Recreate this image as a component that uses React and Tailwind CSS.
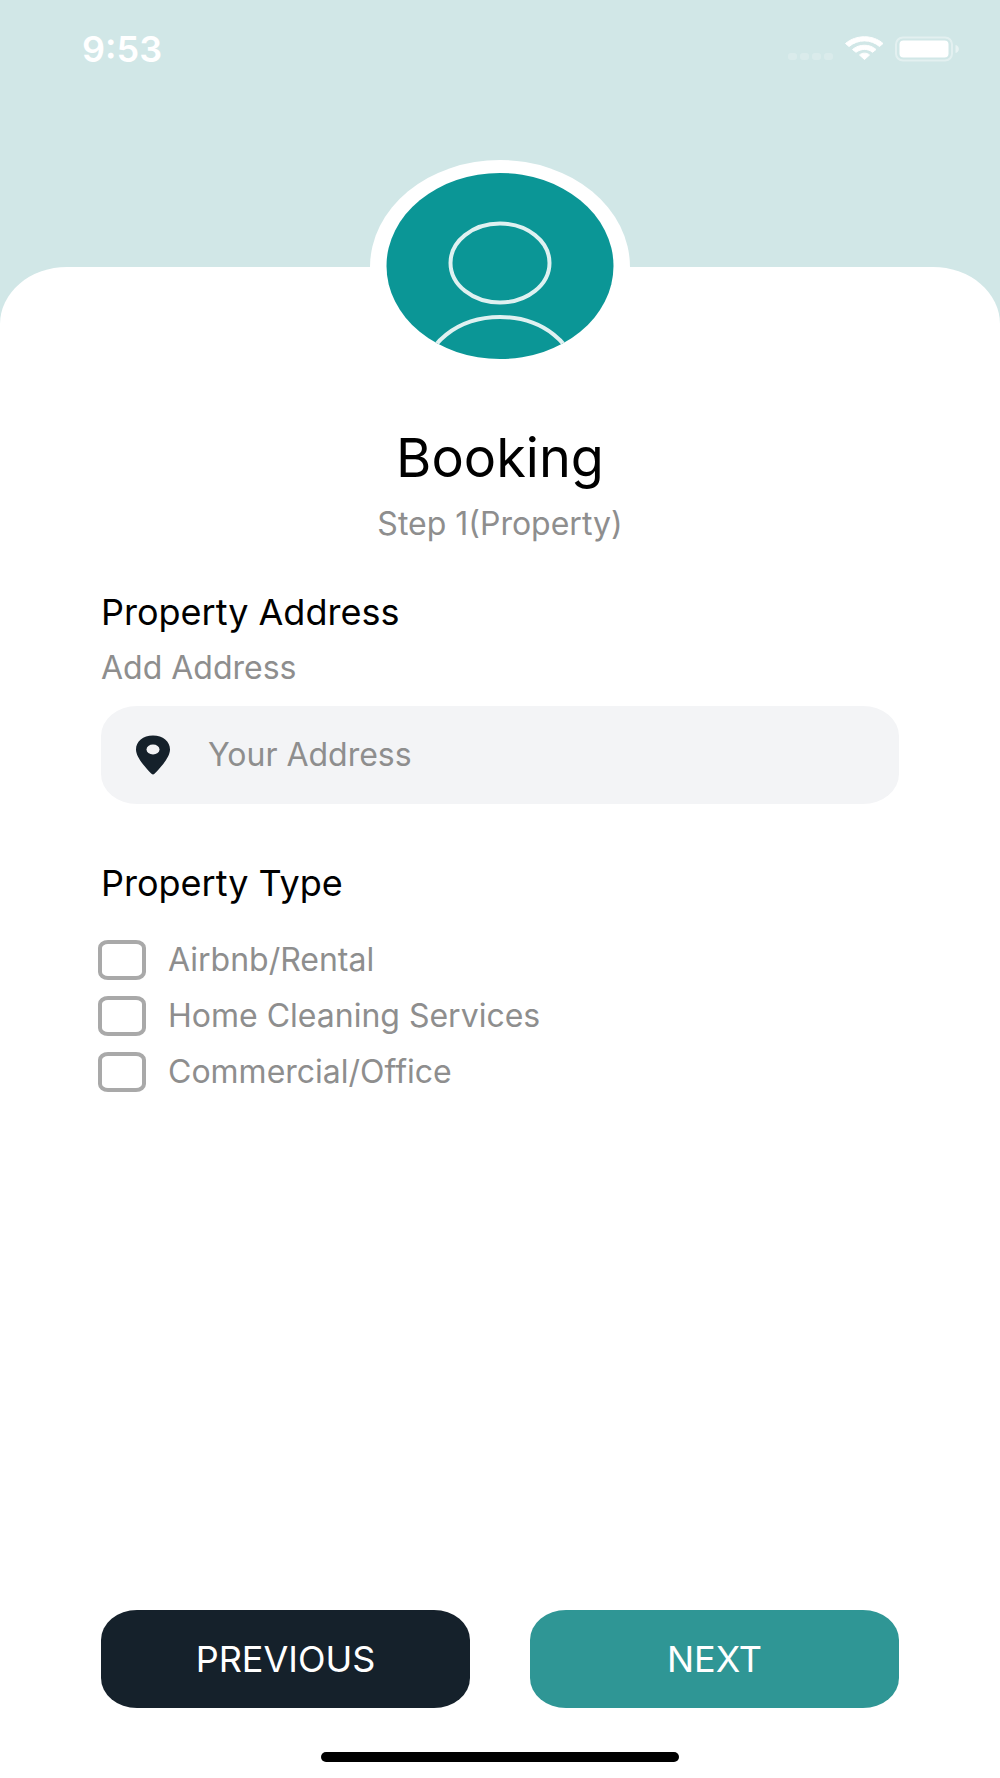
import React, { useState } from 'react';

const propertyTypes = [
  { id: 'rental', label: 'Airbnb/Rental' },
  { id: 'home', label: 'Home Cleaning Services' },
  { id: 'office', label: 'Commercial/Office' },
];

const StatusBar = () => (
  <div className="flex h-[98px] items-center justify-between pl-[82px] pr-[40px] text-white">
    <span className="text-[36px] leading-[40px] font-semibold">9:53</span>
    <svg width="172" height="28" viewBox="0 0 172 28" fill="none" aria-hidden="true">
      {/* no signal dots */}
      <g fill="#fff" fillOpacity="0.2">
        <rect x="0" y="18" width="9" height="7" rx="3" />
        <rect x="12" y="18" width="9" height="7" rx="3" />
        <rect x="24" y="18" width="9" height="7" rx="3" />
        <rect x="36" y="18" width="9" height="7" rx="3" />
      </g>
      {/* wifi */}
      <g fill="#fff" stroke="#fff" strokeWidth="1" strokeLinejoin="round">
        <path d="M57.5 8.5C68 -0.5 85 -0.5 95 8.500L91.500 11.500C83 4 70 4 61 11.500Z" />
        <path d="M64.500 14.500C71 8.800 82 8.800 88 14.500L84.500 17.300C80 13.500 73 13.500 68 17.300Z" />
        <path d="M71.500 20C74 17.500 79 17.500 81.500 20L76.500 24.500Z" />
      </g>
      {/* battery */}
      <rect x="108" y="2.5" width="56" height="23" rx="7" stroke="#fff" strokeOpacity="0.4" strokeWidth="2" />
      <rect x="111.5" y="5.5" width="49" height="17" rx="4" fill="#fff" />
      <path d="M167.5 10C172 11 172 17 167.5 18Z" fill="#fff" fillOpacity="0.5" />
    </svg>
  </div>
);

const Avatar = () => (
  <svg className="mx-auto -mt-[107px]" width="260" height="214" viewBox="0 0 260 214" fill="none" aria-hidden="true">
    <defs>
      <clipPath id="avatar-clip">
        <ellipse cx="130" cy="106" rx="113.5" ry="93" />
      </clipPath>
    </defs>
    <ellipse cx="130" cy="107" rx="130" ry="107" fill="#fff" />
    <ellipse cx="130" cy="106" rx="113.5" ry="93" fill="#0b9696" />
    <g clipPath="url(#avatar-clip)" stroke="#dff1f1" strokeWidth="4">
      <ellipse cx="130" cy="103" rx="49.5" ry="39.5" />
      <ellipse cx="130" cy="217" rx="76" ry="60" />
    </g>
  </svg>
);

const PinIcon = () => (
  <svg width="36" height="40" viewBox="0 0 36 40" aria-hidden="true">
    <path d="M18 0.5C8 0.5 1 6.5 1 14.5C1 23.5 13.5 35.5 16.5 38.8Q18 40 19.5 38.8C22.5 35.5 35 23.5 35 14.5C35 6.5 28 0.5 18 0.5Z" fill="#15212b" />
    <ellipse cx="18" cy="14.5" rx="6.5" ry="5" fill="#f3f4f6" />
  </svg>
);

const App = () => {
  const [address, setAddress] = useState('');
  const [selected, setSelected] = useState([]);

  const toggle = (id) => {
    setSelected(selected.includes(id) ? selected.filter((s) => s !== id) : [...selected, id]);
  };

  return (
    <div className="flex min-h-screen flex-col bg-[#d1e7e7] font-['Inter','Liberation_Sans',sans-serif]">
      <header className="h-[267px]">
        <StatusBar />
      </header>

      <main className="flex flex-1 flex-col rounded-t-[67px_57px] bg-white">
        <Avatar />
        <h1 className="mt-[52px] text-center text-[54px] leading-[64px] text-black">Booking</h1>
        <p className="mt-[14px] text-center text-[32px] leading-[40px] text-[#8e8e8e]">Step 1(Property)</p>

        <form className="flex flex-1 flex-col px-[101px]" onSubmit={(e) => e.preventDefault()}>
          <h2 className="mt-[44px] text-[36px] leading-[48px] text-black">Property Address</h2>
          <label htmlFor="address" className="mt-[12px] text-[32px] leading-[40px] text-[#8e8e8e]">Add Address</label>
          <div className="mt-[18px] flex h-[98px] items-center gap-[37px] rounded-[36px/30px] bg-[#f3f4f6] px-[34px]">
            <PinIcon />
            <input
              id="address"
              type="text"
              placeholder="Your Address"
              value={address}
              onChange={(e) => setAddress(e.target.value)}
              className="min-w-0 flex-1 bg-transparent text-[32px] leading-[40px] text-black outline-none placeholder:text-[#8e8e8e]"
            />
          </div>

          <fieldset className="-ml-[3px]">
            <legend className="pl-[3px] pt-[55px] text-[36px] leading-[48px] text-black">Property Type</legend>
            <div className="mt-[33px] flex flex-col gap-[16px]">
              {propertyTypes.map(({ id, label }) => (
                <div key={id} className="flex h-[40px] items-center gap-[22px]">
                  <input
                    id={id}
                    type="checkbox"
                    checked={selected.includes(id)}
                    onChange={() => toggle(id)}
                    className="h-[40px] w-[48px] appearance-none rounded-[10px/8px] border-4 border-[#a9a9a9] bg-white checked:bg-[#2f9695]"
                  />
                  <label htmlFor={id} className="text-[32px] leading-[40px] text-[#8e8e8e]">{label}</label>
                </div>
              ))}
            </div>
          </fieldset>

          <div className="mt-auto grid grid-cols-2 gap-[60px] pt-[60px]">
            <button type="button" className="h-[98px] rounded-[36px/30px] bg-[#15212b] text-[36px] leading-[40px] text-white">PREVIOUS</button>
            <button type="submit" className="h-[98px] rounded-[36px/30px] bg-[#2f9695] text-[36px] leading-[40px] text-white">NEXT</button>
          </div>
        </form>

        <div className="mx-auto mt-[44px] mb-[16px] h-[10px] w-[358px] rounded-full bg-black" />
      </main>
    </div>
  );
};

export default App;
